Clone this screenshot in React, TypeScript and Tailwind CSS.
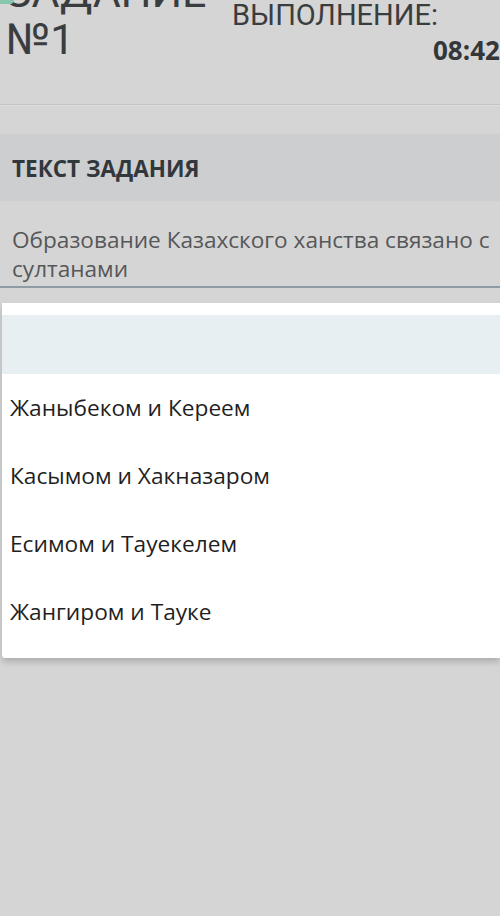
import React from "react";

export default function App() {
  const options = [
    "Жаныбеком и Кереем",
    "Касымом и Хакназаром",
    "Есимом и Тауекелем",
    "Жангиром и Тауке",
  ];
  return (
    <div className="relative w-[500px] h-[916px] overflow-hidden bg-[#d5d5d5]" style={{ fontFamily: '"Open Sans", sans-serif' }}>
      <div className="absolute left-0 top-0 w-[14px] h-[4px] rounded-br-sm bg-[#86c7ad]" />
      {/* header */}
      <div className="flex h-[104px] pl-[6px]">
        <div className="mt-[-31px] text-[43px] leading-[47px] text-[#3a3d40] whitespace-nowrap w-[226px]" style={{ fontFamily: 'Roboto, sans-serif' }}>
          <div>ЗАДАНИЕ</div>
          <div>№1</div>
        </div>
        <div className="flex flex-col">
          <div className="mt-[-2px] text-[29px] leading-[34px] text-[#3a3d40] whitespace-nowrap" style={{ fontFamily: 'Roboto, sans-serif' }}>ВЫПОЛНЕНИЕ:</div>
          <div className="mt-[3px] pl-[201px] text-[26px] leading-[30px] font-bold text-[#33373a] whitespace-nowrap">08:42</div>
        </div>
      </div>
      <div className="h-px bg-[#c3c3c3]" />
      <div className="h-px bg-[#dedede]" />
      <div className="h-[28px]" />
      <div className="h-[67px] bg-[#cdcecf] flex items-center px-[12px]">
        <span className="text-[22.5px] font-bold text-[#32373c] mt-[2px]">ТЕКСТ ЗАДАНИЯ</span>
      </div>
      <div className="pl-[12px] pr-0 pt-[24px] pb-[3px] text-[22.6px] leading-[29px] text-[#555759]">
        Образование Казахского ханства связано с султанами
      </div>
      <div className="h-[2px] bg-[#8d9ca4]" />
      <div className="h-[15px]" />
      <div className="ml-[2px] bg-white pt-[12px] pb-[12px] rounded-bl-[3px] shadow-[0_4px_6px_rgba(0,0,0,0.18)]">
        <div className="h-[59px] bg-[#e8eff2]" />
        {options.map((o) => (
          <div key={o} className="h-[68px] leading-[68px] px-[8px] text-[22.7px] text-[#1f1f1f] whitespace-nowrap">
            {o}
          </div>
        ))}
      </div>
    </div>
  );
}
